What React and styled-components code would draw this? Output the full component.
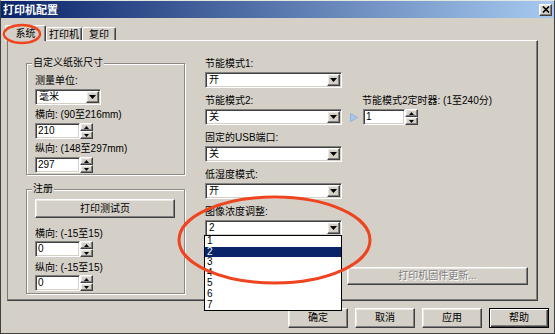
import React from 'react';
import styled, { createGlobalStyle, css } from 'styled-components';

const FACE = '#d4d0c8';

const GlobalStyle = createGlobalStyle`
  html, body { margin: 0; padding: 0; background: ${FACE}; }
  body {
    font-family: "Liberation Sans", "Noto Sans CJK SC", sans-serif;
    font-size: 10px;
    color: #000;
  }
  * { box-sizing: border-box; }
`;

const raised = css`
  border: 1px solid;
  border-color: #fff #404040 #404040 #fff;
  box-shadow: inset -1px -1px 0 #808080, inset 1px 1px 0 #ebe9e4;
  background: ${FACE};
`;

const sunken = css`
  border: 1px solid;
  border-color: #808080 #fff #fff #808080;
  box-shadow: inset 1px 1px 0 #404040, inset -1px -1px 0 ${FACE};
  background: #fff;
`;

const Window = styled.div`
  position: relative;
  width: 555px;
  height: 334px;
  background: ${FACE};
  border: 1px solid #404040;
  border-top-color: #e8e6e1;
  display: flex;
  flex-direction: column;
  overflow: hidden;
`;

const TitleBar = styled.div`
  height: 17px;
  flex: none;
  background: linear-gradient(to right, #0a246a, #a6caf0);
  display: flex;
  align-items: center;
  justify-content: space-between;
  padding: 0 2px 0 2px;
`;

const Title = styled.span`
  color: #fff;
  font-weight: bold;
  font-size: 11px;
  line-height: 12px;
`;

const CloseBtn = styled.div`
  ${raised};
  width: 13px;
  height: 12px;
  display: flex;
  align-items: center;
  justify-content: center;
`;

const Body = styled.div`
  display: flex;
  flex-direction: column;
  padding: 7px 5px 0 6px;
`;

const TabRow = styled.div`
  position: relative;
  z-index: 2;
  height: 15px;
  display: flex;
  align-items: flex-end;
`;

const Tab = styled.div`
  width: ${p => p.$w}px;
  height: ${p => (p.$active ? 16 : 13)}px;
  margin-left: ${p => (p.$active ? -2 : 0)}px;
  margin-bottom: ${p => (p.$active ? -1 : 0)}px;
  background: ${FACE};
  border: 1px solid;
  border-bottom: none;
  border-color: #fff #404040 transparent #fff;
  box-shadow: inset -1px 0 0 #808080;
  border-radius: 2px 2px 0 0;
  display: flex;
  align-items: center;
  justify-content: center;
  padding-top: ${p => (p.$active ? 0 : 1)}px;
  line-height: 12px;
`;

const Panel = styled.div`
  width: 531px;
  height: 261px;
  border: 1px solid;
  border-color: #fff #404040 #404040 #7a7874;
  box-shadow: inset -1px -1px 0 #808080;
  display: flex;
  padding: 16px 8px 0 18px;
`;

const LeftCol = styled.div`
  width: 159px;
  flex: none;
  display: flex;
  flex-direction: column;
  gap: 8px;
`;

const Group = styled.fieldset`
  margin: 0;
  min-width: 0;
  padding: ${p => p.$pt}px 0 ${p => p.$pb}px 8px;
  border: 1px solid #8d8a84;
  box-shadow: inset 1px 1px 0 #fff, 1px 1px 0 #fff;
`;

const Legend = styled.legend`
  margin-left: -3px;
  padding: 0 1px;
  line-height: 12px;
  background: ${FACE};
`;

const Field = styled.div`
  display: flex;
  flex-direction: column;
  align-items: flex-start;
  gap: ${p => p.$gap}px;
  margin-top: ${p => p.$mt || 0}px;
`;

const Label = styled.div`
  line-height: 12px;
  height: 12px;
  white-space: nowrap;
`;

const SelectBox = styled.div`
  ${sunken};
  width: ${p => p.$w}px;
  height: 16px;
  padding: 1px;
  display: flex;
  align-items: stretch;
`;

const SelectValue = styled.div`
  flex: 1;
  padding-left: 2px;
  line-height: 12px;
`;

const DropBtn = styled.div`
  ${raised};
  width: 13px;
  display: flex;
  align-items: center;
  justify-content: center;
`;

const SpinWrap = styled.div`
  display: flex;
  height: 16px;
  margin-left: ${p => p.$ml || 0}px;
`;

const SpinInput = styled.div`
  ${sunken};
  width: ${p => p.$w}px;
  height: 16px;
  padding-left: 2px;
  line-height: 14px;
`;

const SpinButtons = styled.div`
  width: 13px;
  display: flex;
  flex-direction: column;
`;

const SpinBtn = styled.div`
  ${raised};
  flex: 1;
  display: flex;
  align-items: center;
  justify-content: center;
`;

const PushButton = styled.div`
  ${raised};
  width: ${p => p.$w}px;
  height: ${p => p.$h}px;
  margin-left: ${p => p.$ml || 0}px;
  flex: none;
  display: flex;
  align-items: center;
  justify-content: center;
  line-height: 12px;
  color: ${p => (p.$disabled ? '#808080' : '#000')};
  text-shadow: ${p => (p.$disabled ? '1px 1px 0 #fff' : 'none')};
  ${p =>
    p.$default &&
    css`
      border-color: #000;
      box-shadow: inset 1px 1px 0 #fff, inset -1px -1px 0 #404040,
        inset -2px -2px 0 #808080;
    `}
`;

const RightCol = styled.div`
  width: 137px;
  flex: none;
  margin-left: 20px;
  margin-top: 1px;
  display: flex;
  flex-direction: column;
  gap: 7px;
`;

const TimerCol = styled.div`
  flex: 1;
  display: flex;
  flex-direction: column;
  padding-bottom: 15px;
`;

const TimerBlock = styled.div`
  margin-top: 38px;
  display: flex;
  flex-direction: column;
  gap: 2px;
`;

const TimerLabel = styled(Label)`
  margin-left: 20px;
`;

const TimerRow = styled.div`
  display: flex;
  align-items: center;
  padding-left: 8px;
`;

const Spacer = styled.div`
  flex: 1;
`;

const ButtonRow = styled.div`
  margin-top: 7px;
  display: flex;
  justify-content: flex-end;
  gap: 7px;
`;

const DropList = styled.div`
  position: absolute;
  left: 203px;
  top: 234px;
  width: 138px;
  height: 76px;
  background: #fff;
  border: 1px solid #000;
  z-index: 5;
`;

const ListItem = styled.div`
  height: 10.6px;
  line-height: 10.6px;
  padding-left: 2px;
  background: ${p => (p.$sel ? '#0a246a' : 'transparent')};
  color: ${p => (p.$sel ? '#fff' : '#000')};
`;

const Annotations = styled.svg`
  position: absolute;
  left: -1px;
  top: -1px;
  width: 555px;
  height: 334px;
  pointer-events: none;
  z-index: 10;
`;

const DownArrow = () => (
  <svg width="7" height="4" viewBox="0 0 7 4">
    <polygon points="0,0 7,0 3.5,4" fill="#000" />
  </svg>
);

const SmallArrow = ({ up }) => (
  <svg width="5" height="3" viewBox="0 0 5 3">
    <polygon points={up ? '0,3 5,3 2.5,0' : '0,0 5,0 2.5,3'} fill="#000" />
  </svg>
);

const Select = ({ w, value }) => (
  <SelectBox $w={w}>
    <SelectValue>{value}</SelectValue>
    <DropBtn>
      <DownArrow />
    </DropBtn>
  </SelectBox>
);

const Spin = ({ w, value, ml }) => (
  <SpinWrap $ml={ml}>
    <SpinInput $w={w}>{value}</SpinInput>
    <SpinButtons>
      <SpinBtn>
        <SmallArrow up />
      </SpinBtn>
      <SpinBtn>
        <SmallArrow />
      </SpinBtn>
    </SpinButtons>
  </SpinWrap>
);

const rightFields = [
  ['节能模式1:', '开'],
  ['节能模式2:', '关'],
  ['固定的USB端口:', '关'],
  ['低湿度模式:', '开'],
  ['图像浓度调整:', '2'],
];

export default function App() {
  return (
    <>
      <GlobalStyle />
      <Window>
        <TitleBar>
          <Title>打印机配置</Title>
          <CloseBtn>
            <svg width="8" height="7" viewBox="0 0 8 7">
              <path d="M1 0.5 L7 6.5 M7 0.5 L1 6.5" stroke="#000" strokeWidth="1.6" />
            </svg>
          </CloseBtn>
        </TitleBar>
        <Body>
          <TabRow>
            <Tab $active $w={41}>系统</Tab>
            <Tab $w={36}>打印机</Tab>
            <Tab $w={34}>复印</Tab>
          </TabRow>
          <Panel>
            <LeftCol>
              <Group $pt={6} $pb={1}>
                <Legend>自定义纸张尺寸</Legend>
                <Field $gap={2}>
                  <Label>测量单位:</Label>
                  <Select w={66} value="毫米" />
                </Field>
                <Field $gap={2} $mt={4}>
                  <Label>横向: (90至216mm)</Label>
                  <Spin w={45} value="210" />
                </Field>
                <Field $gap={2} $mt={4}>
                  <Label>纵向: (148至297mm)</Label>
                  <Spin w={45} value="297" />
                </Field>
              </Group>
              <Group $pt={4} $pb={2}>
                <Legend>注册</Legend>
                <PushButton $w={140} $h={19}>打印测试页</PushButton>
                <Field $gap={1} $mt={10}>
                  <Label>横向: (-15至15)</Label>
                  <Spin w={45} value="0" />
                </Field>
                <Field $gap={1} $mt={5}>
                  <Label>纵向: (-15至15)</Label>
                  <Spin w={45} value="0" />
                </Field>
              </Group>
            </LeftCol>
            <RightCol>
              {rightFields.map(([label, value]) => (
                <Field key={label} $gap={2}>
                  <Label>{label}</Label>
                  <Select w={137} value={value} />
                </Field>
              ))}
            </RightCol>
            <TimerCol>
              <TimerBlock>
                <TimerLabel>节能模式2定时器: (1至240分)</TimerLabel>
                <TimerRow>
                  <svg width="8" height="9" viewBox="0 0 8 9">
                    <polygon points="0.5,0.5 7.5,4.5 0.5,8.5" fill="#a9c8ec" stroke="#8fb3e0" strokeWidth="1" />
                  </svg>
                  <Spin w={42} value="1" ml={5} />
                </TimerRow>
              </TimerBlock>
              <Spacer />
              <PushButton $w={181} $h={18} $ml={5} $disabled>
                打印机固件更新...
              </PushButton>
            </TimerCol>
          </Panel>
          <ButtonRow>
            <PushButton $w={60} $h={20}>确定</PushButton>
            <PushButton $w={60} $h={20}>取消</PushButton>
            <PushButton $w={60} $h={20}>应用</PushButton>
            <PushButton $w={60} $h={20} $default>帮助</PushButton>
          </ButtonRow>
        </Body>
        <DropList>
          {['1', '2', '3', '4', '5', '6', '7'].map(n => (
            <ListItem key={n} $sel={n === '2'}>{n}</ListItem>
          ))}
        </DropList>
        <Annotations viewBox="0 0 555 334">
          <ellipse cx="22" cy="34" rx="18" ry="9" fill="none" stroke="#ee4420" strokeWidth="2.5" />
          <ellipse cx="274.5" cy="240" rx="95.5" ry="43" fill="none" stroke="#ee4420" strokeWidth="3" />
        </Annotations>
      </Window>
    </>
  );
}
